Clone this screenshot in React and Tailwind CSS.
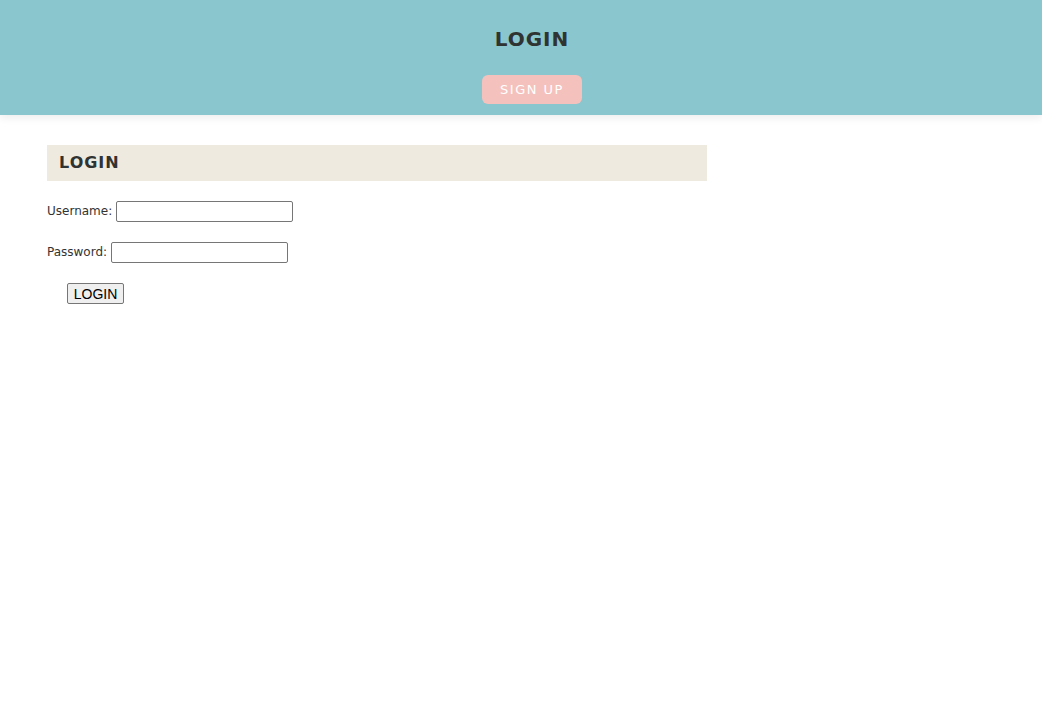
import React from 'react';

const App = () => {
  return (
    <div className="min-h-[711px] bg-white font-['DejaVu_Sans',sans-serif] text-[#333]">
      <header className="relative h-[115px] bg-[#8ac6ce] flex flex-col items-center pl-[22px] shadow-[0_3px_8px_rgba(0,0,0,0.07)]">
        <h1 className="mt-[27px] text-[20px] leading-[24px] font-bold tracking-[1px] text-[#2f3332]">LOGIN</h1>
        <button className="mt-[24px] w-[100px] h-[29px] rounded-[6px] bg-[#f5c1bd] text-white text-[13px] tracking-[1.5px]">
          SIGN UP
        </button>
      </header>

      <main className="px-[47px] pt-[30px]">
        <div className="w-[660px] h-[36px] bg-[#efeae0] flex items-center pl-[12px]">
          <h2 className="text-[16px] font-bold tracking-[1px] text-[#2f3332]">LOGIN</h2>
        </div>

        <form className="text-[12px]">
          <div className="mt-[20px] flex items-center gap-[4px] h-[21px]">
            <label className="-mt-[1px]">Username:</label>
            <input type="text" className="w-[177px] h-[21px] border border-[#767676] rounded-[2px]" />
          </div>
          <div className="mt-[20px] flex items-center gap-[4px] h-[21px]">
            <label className="-mt-[1px]">Password:</label>
            <input type="password" className="w-[177px] h-[21px] border border-[#767676] rounded-[2px]" />
          </div>
          <div className="mt-[20px] pl-[20px]">
            <button type="button" className="w-[57px] h-[21px] border border-[#767676] rounded-[2px] bg-[#efefef] text-black font-['Liberation_Sans',sans-serif] text-[14px] leading-none">
              LOGIN
            </button>
          </div>
        </form>
      </main>
    </div>
  );
};

export default App;
